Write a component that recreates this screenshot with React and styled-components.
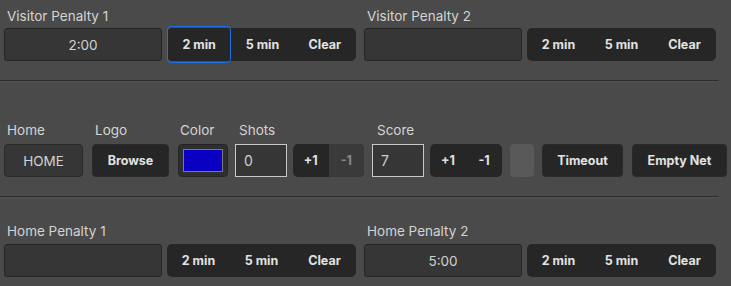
import React from "react";
import styled, {createGlobalStyle, css} from "styled-components";

const GlobalStyle = createGlobalStyle`
  html, body {
    margin: 0;
    padding: 0;
    background: #4a4a4a;
  }
  body {
    font-family: Inter, "Liberation Sans", sans-serif;
    color: #d6d6d6;
  }
`

const Page = styled.div`
  width: 731px;
  height: 286px;
  background: #4a4a4a;
  overflow: hidden;
`

const Section = styled.div`
  padding: ${props => props.$pad || "8px 0 0 4px"};
  display: flex;
`

const Divider = styled.div`
  width: 719px;
  height: 1px;
  background: #2c2c2c;
  border-bottom: 1px solid #525252;
  margin: ${props => props.$m || "0"};
`

const Column = styled.div`
  display: flex;
  flex-direction: column;
  margin-left: ${props => props.$ml || 0}px;
`

const Label = styled.div`
  font-size: 13.5px;
  line-height: 16px;
  height: 16px;
  padding-left: ${props => props.$inset || 3}px;
  margin-bottom: ${props => props.$mb || 4}px;
  color: #d4d4d4;
  white-space: nowrap;
`

const Row = styled.div`
  display: flex;
  align-items: center;
  gap: ${props => props.$gap || 5}px;
`

const TimeBox = styled.div`
  box-sizing: border-box;
  width: 158px;
  height: 33px;
  background: #363636;
  border: 1px solid #262626;
  border-radius: 3px;
  display: flex;
  align-items: center;
  justify-content: center;
  font-size: 13.5px;
  color: #d2d2d2;
`

const Segmented = styled.div`
  box-sizing: border-box;
  width: ${props => props.$w || 189}px;
  height: 33px;
  background: #262626;
  border-radius: 5px;
  display: flex;
  align-items: center;
`

const SegButton = styled.div`
  box-sizing: border-box;
  flex: 1;
  height: 100%;
  display: flex;
  align-items: center;
  justify-content: center;
  font-size: 12.5px;
  font-weight: 700;
  color: #e2e2e2;
  border-radius: 5px;
  ${props => props.$focused && css`
    height: 37px;
    border: 1.5px solid #1e6fe6;
    border-radius: 4px;
  `}
  ${props => props.$disabled && css`
    background: #3a3a3a;
    color: #8a8a8a;
    border-radius: 0 5px 5px 0;
  `}
`

const PlainBox = styled.div`
  box-sizing: border-box;
  height: 33px;
  width: ${props => props.$w}px;
  background: ${props => props.$dark ? "#262626" : "#363636"};
  border: 1px solid #2a2a2a;
  border-radius: 4px;
  display: flex;
  align-items: center;
  justify-content: center;
  font-size: ${props => props.$bold ? 12.5 : 13.5}px;
  font-weight: ${props => props.$bold ? 700 : 400};
  color: ${props => props.$bold ? "#e2e2e2" : "#d2d2d2"};
  white-space: nowrap;
`

const NumInput = styled.div`
  box-sizing: border-box;
  width: 52px;
  height: 33px;
  background: #363636;
  border: 1px solid #c9c9c9;
  display: flex;
  align-items: center;
  padding-left: 8px;
  font-size: 14px;
  color: #cfcfcf;
`

const Swatch = styled.div`
  box-sizing: border-box;
  width: 50px;
  height: 33px;
  background: #2e2e2e;
  border: 1px solid #242424;
  border-radius: 4px;
  padding: 4px;
`

const SwatchColor = styled.div`
  box-sizing: border-box;
  width: 100%;
  height: 100%;
  background: ${props => props.$color};
  border: 1px solid #7a7a7a;
`

const Indicator = styled.div`
  width: 24px;
  height: 33px;
  background: #595959;
  border-radius: 4px;
`

function PenaltyColumn({label, time, focused, ml, mb}) {
    return (
        <Column $ml={ml}>
            <Label $mb={mb}>{label}</Label>
            <Row $gap={5}>
                <TimeBox>{time}</TimeBox>
                <Segmented>
                    <SegButton $focused={focused}>2 min</SegButton>
                    <SegButton>5 min</SegButton>
                    <SegButton>Clear</SegButton>
                </Segmented>
            </Row>
        </Column>
    )
}

function Field({label, ml, children, inset}) {
    return (
        <Column $ml={ml}>
            <Label $mb={6} $inset={inset}>{label || "\u00a0"}</Label>
            {children}
        </Column>
    )
}

export default function App() {
    return (
        <Page>
            <GlobalStyle/>
            <Section>
                <PenaltyColumn label="Visitor Penalty 1" time="2:00" focused/>
                <PenaltyColumn label="Visitor Penalty 2" time="" ml={8}/>
            </Section>
            <Divider $m="19px 0 0 0"/>
            <Section $pad="40px 0 0 4px">
                <Field label="Home"><PlainBox $w={79}>HOME</PlainBox></Field>
                <Field label="Logo" ml={9}><PlainBox $w={77} $dark $bold>Browse</PlainBox></Field>
                <Field label="Color" ml={9} inset={2}><Swatch><SwatchColor $color="#0a00c2"/></Swatch></Field>
                <Field label="Shots" ml={7} inset={4}><NumInput>0</NumInput></Field>
                <Field ml={6}>
                    <Segmented $w={71}>
                        <SegButton>+1</SegButton>
                        <SegButton $disabled>-1</SegButton>
                    </Segmented>
                </Field>
                <Field label="Score" ml={8} inset={5}><NumInput>7</NumInput></Field>
                <Field ml={6}>
                    <Segmented $w={72}>
                        <SegButton>+1</SegButton>
                        <SegButton>-1</SegButton>
                    </Segmented>
                </Field>
                <Field ml={8}><Indicator/></Field>
                <Field ml={8}><PlainBox $w={81} $dark $bold>Timeout</PlainBox></Field>
                <Field ml={9}><PlainBox $w={95} $dark $bold>Empty Net</PlainBox></Field>
            </Section>
            <Divider $m="19px 0 0 0"/>
            <Section $pad="25px 0 0 4px">
                <PenaltyColumn label="Home Penalty 1" time="" mb={5}/>
                <PenaltyColumn label="Home Penalty 2" time="5:00" ml={8} mb={5}/>
            </Section>
        </Page>
    )
}
